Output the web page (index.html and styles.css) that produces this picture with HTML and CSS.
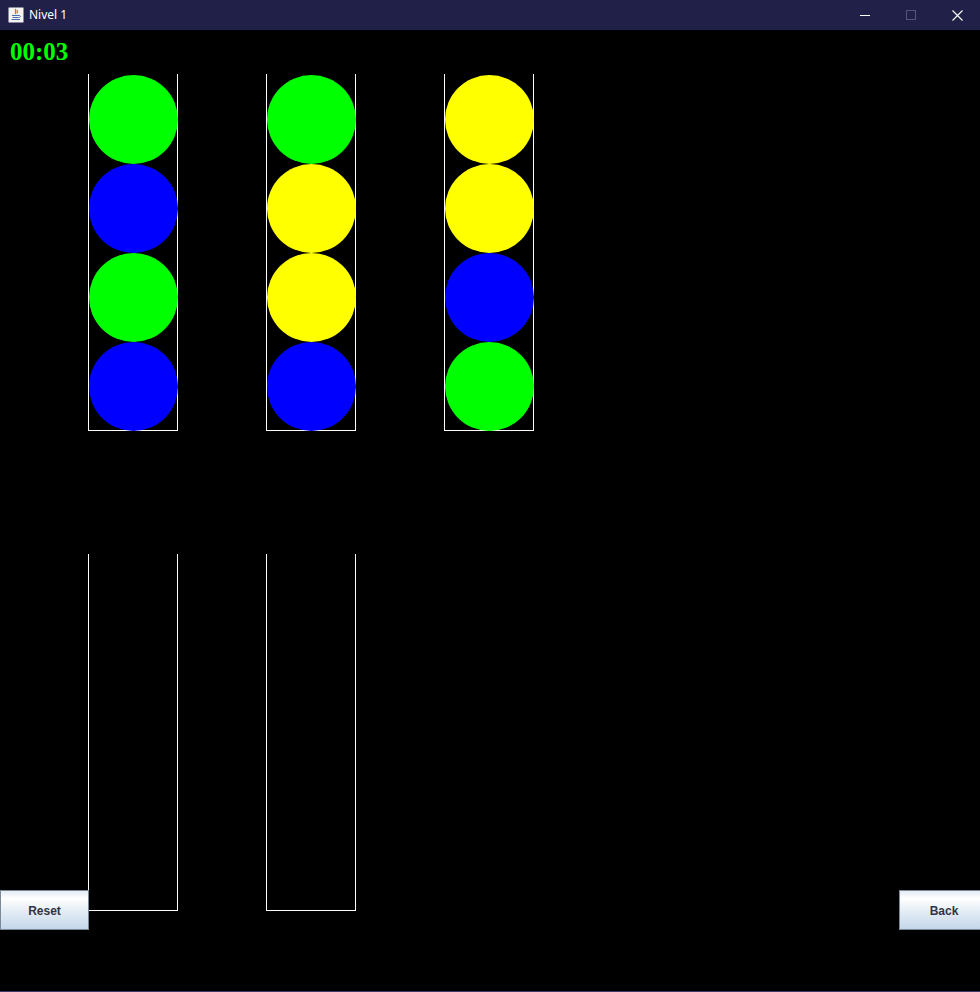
FILE: index.html
```html
<!DOCTYPE html>
<html>
<head>
<meta charset="utf-8">
<title>Nivel 1</title>
<link rel="stylesheet" href="styles.css">
</head>
<body>
<div class="window">
  <div class="titlebar">
    <div class="app">
      <svg class="app-icon" width="16" height="16" viewBox="0 0 16 16">
        <rect x="0.5" y="0.5" width="15" height="15" rx="1" fill="#f4f4f4" stroke="#8a8a9a"/>
        <path d="M8 2 C6 4 9 5 7 7 M9.5 3 C8.5 4.5 10 5 9 6.5" stroke="#e06b1f" stroke-width="1.2" fill="none"/>
        <path d="M4 8.5 H11 M4.5 10.5 H10.5 M3.5 12.5 H12" stroke="#4a6fa5" stroke-width="1" fill="none"/>
        <path d="M11 8.5 C13 8.5 13 10.5 10.5 10.5" stroke="#4a6fa5" stroke-width="0.9" fill="none"/>
      </svg>
      <span class="title">Nivel 1</span>
    </div>
    <div class="controls">
      <span class="ctl"><svg width="10" height="10" viewBox="0 0 10 10"><path d="M0 5.5 H10" stroke="#ffffff" stroke-width="1"/></svg></span>
      <span class="ctl"><svg width="10" height="10" viewBox="0 0 10 10"><rect x="0.5" y="0.5" width="9" height="9" fill="none" stroke="#55557a" stroke-width="1"/></svg></span>
      <span class="ctl"><svg width="11" height="11" viewBox="0 0 11 11"><path d="M0.5 0.5 L10.5 10.5 M10.5 0.5 L0.5 10.5" stroke="#ffffff" stroke-width="1.1"/></svg></span>
    </div>
  </div>
  <div class="board">
    <div class="timer">00:03</div>
    <div class="row row-top">
      <div class="tube">
        <div class="ball green"></div>
        <div class="ball blue"></div>
        <div class="ball green"></div>
        <div class="ball blue"></div>
      </div>
      <div class="tube">
        <div class="ball green"></div>
        <div class="ball yellow"></div>
        <div class="ball yellow"></div>
        <div class="ball blue"></div>
      </div>
      <div class="tube">
        <div class="ball yellow"></div>
        <div class="ball yellow"></div>
        <div class="ball blue"></div>
        <div class="ball green"></div>
      </div>
    </div>
    <div class="row row-bottom">
      <div class="tube"></div>
      <div class="tube"></div>
    </div>
    <button class="btn btn-reset">Reset</button>
    <button class="btn btn-back">Back</button>
  </div>
</div>
</body>
</html>
```
FILE: styles.css
```css
html, body {
  margin: 0;
  padding: 0;
  background: #000000;
}
.window {
  width: 980px;
  height: 992px;
  display: flex;
  flex-direction: column;
  overflow: hidden;
}
.titlebar {
  height: 30px;
  background: #202048;
  display: flex;
  align-items: center;
  justify-content: space-between;
  flex-shrink: 0;
}
.app {
  display: flex;
  align-items: center;
  padding-left: 8px;
  gap: 5px;
}
.app-icon {
  display: block;
}
.title {
  font-family: "Noto Sans", "Liberation Sans", sans-serif;
  font-size: 12px;
  color: #ffffff;
  line-height: 16px;
}
.controls {
  display: flex;
  height: 30px;
}
.ctl {
  width: 46px;
  height: 30px;
  display: flex;
  align-items: center;
  justify-content: center;
}
.ctl svg {
  display: block;
}
.board {
  position: relative;
  flex: 1;
  background: #000000;
  border-bottom: 1px solid #3a3a6a;
}
.timer {
  font-family: "Liberation Serif", "Times New Roman", serif;
  font-weight: bold;
  font-size: 25px;
  color: #00ff00;
  line-height: 25px;
  padding: 9px 0 0 10px;
  height: 35px;
}
.row {
  display: flex;
  align-items: flex-start;
  gap: 88px;
  padding-left: 88px;
}
.row-bottom {
  margin-top: 123px;
}
.tube {
  width: 88px;
  height: 355px;
  border-left: 1px solid #ffffff;
  border-right: 1px solid #ffffff;
  border-bottom: 1px solid #ffffff;
  display: flex;
  flex-direction: column;
  padding-top: 1px;
  box-sizing: content-box;
}
.ball {
  width: 89px;
  height: 89px;
  flex-shrink: 0;
  border-radius: 50%;
}
.green { background: #00ff00; }
.blue { background: #0000ff; }
.yellow { background: #ffff00; }
.btn {
  position: absolute;
  top: 860px;
  height: 40px;
  border: 1px solid #7a8a99;
  background: linear-gradient(to bottom, #e4ecf4 0%, #ffffff 20%, #e6eef6 50%, #c4d7ea 100%);
  font-family: "Liberation Sans", Arial, sans-serif;
  font-weight: bold;
  font-size: 12px;
  color: #333344;
  padding: 2px 0 0 0;
  margin: 0;
  box-sizing: border-box;
}
.btn-reset {
  left: 0;
  width: 89px;
}
.btn-back {
  left: 899px;
  width: 90px;
}
```
